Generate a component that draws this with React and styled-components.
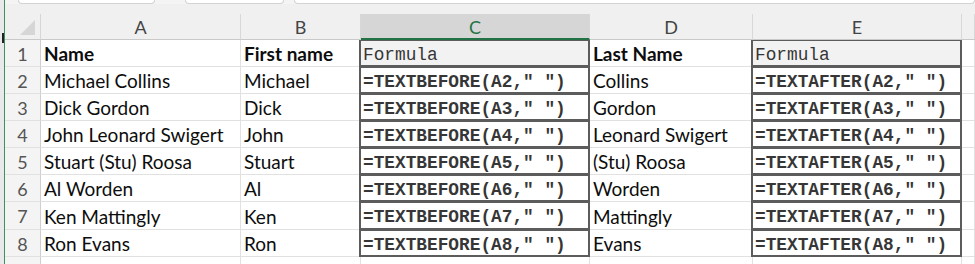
import React from "react";
import styled, { createGlobalStyle, css } from "styled-components";

const Global = createGlobalStyle`
  html, body { margin: 0; padding: 0; background: #ffffff; }
  #root { width: 975px; height: 264px; overflow: hidden; }
`;

const Frame = styled.div`
  display: flex;
  width: 975px;
  height: 264px;
  overflow: hidden;
  background: #ffffff;
`;

const LeftEdge = styled.div`
  position: relative;
  flex: 0 0 4px;
  background: #e9e9e9;
  border-right: 1px solid #3f8f5f;
`;

const EdgeMark = styled.span`
  position: absolute;
  left: 2px;
  top: 33px;
  width: 2px;
  height: 10px;
  background: #222;
`;

const Main = styled.div`
  flex: 1;
  display: flex;
  flex-direction: column;
  min-width: 0;
`;

const TopStrip = styled.div`
  display: flex;
  height: 4px;
  background: #f4f4f4;
  padding-left: 13px;
`;

const Tab = styled.div`
  flex: ${(p) => (p.$grow ? "1" : `0 0 ${p.$w}px`)};
  margin-right: ${(p) => p.$mr || 0}px;
  height: 3px;
  background: #ffffff;
  border: 1px solid #d3d3d3;
  border-top: none;
  border-radius: 0 0 4px 4px;
`;

const Row = styled.div`
  display: flex;
  height: ${(p) => p.$h}px;
  flex: 0 0 ${(p) => p.$h}px;
`;

const HeaderRow = styled.div`
  display: flex;
  height: 36px;
  flex: 0 0 36px;
  background: #f0f0f0;
  align-items: flex-end;
  position: relative;
  z-index: 2;
`;

const Corner = styled.div`
  flex: 0 0 36px;
  height: 26px;
  box-sizing: border-box;
  border-right: 1px solid #d6d6d6;
  border-bottom: 1px solid #c9c9c9;
  display: flex;
  align-items: flex-end;
  justify-content: flex-end;
  padding: 0 5px 4px 0;
`;

const ColHead = styled.div`
  flex: ${(p) => (p.$w ? `0 0 ${p.$w}px` : "1")};
  height: 26px;
  box-sizing: border-box;
  border-right: 1px solid #d8d8d8;
  border-bottom: 1px solid #c9c9c9;
  display: flex;
  align-items: center;
  justify-content: center;
  font-family: "Lato", "Liberation Sans", sans-serif;
  font-size: 18px;
  color: #444444;
  padding-top: 1px;
  ${(p) =>
    p.$active &&
    css`
      background: #d6d6d6;
      color: #217346;
      border-bottom: 2px solid #217346;
    `}
`;

const RowHead = styled.div`
  flex: 0 0 36px;
  box-sizing: border-box;
  background: #f4f4f4;
  border-right: 1px solid #cfcfcf;
  border-bottom: 1px solid #e2e2e2;
  display: flex;
  align-items: center;
  justify-content: center;
  font-family: "Lato", "Liberation Sans", sans-serif;
  font-size: 18px;
  color: #555555;
  padding-top: 1px;
`;

const Cell = styled.div`
  position: relative;
  flex: ${(p) => (p.$w ? `0 0 ${p.$w}px` : "1")};
  box-sizing: border-box;
  border-right: 1px solid #e1e1e1;
  border-bottom: 1px solid #e1e1e1;
  display: flex;
  align-items: center;
  white-space: nowrap;
  overflow: visible;
  padding-left: 3px;
  padding-top: 1px;
  font-family: "Lato", "Liberation Sans", sans-serif;
  font-size: 19px;
  color: #0d0d0d;
  font-weight: ${(p) => (p.$bold ? 700 : 400)};
  background: ${(p) => (p.$shade ? "#f2f2f2" : "#ffffff")};
  ${(p) =>
    p.$mono &&
    css`
      font-family: "Liberation Mono", "Courier New", monospace;
      font-size: 17.8px;
      font-weight: ${p.$bold ? 700 : 400};
      color: #363636;
      padding-left: 2px;
      padding-top: 3px;
    `}
  ${(p) =>
    p.$boxed &&
    css`
      &::after {
        content: "";
        position: absolute;
        top: -1px;
        left: -2px;
        right: -1px;
        bottom: -1px;
        border: 2px solid #5c5c5c;
        pointer-events: none;
      }
    `}
`;

const cols = [
  { key: "A", w: 200 },
  { key: "B", w: 120 },
  { key: "C", w: 229 },
  { key: "D", w: 163 },
  { key: "E", w: 209 },
  { key: "F" },
];

const data = [
  ["Michael Collins", "Michael", "A2", "Collins"],
  ["Dick Gordon", "Dick", "A3", "Gordon"],
  ["John Leonard Swigert", "John", "A4", "Leonard Swigert"],
  ["Stuart (Stu) Roosa", "Stuart", "A5", "(Stu) Roosa"],
  ["Al Worden", "Al", "A6", "Worden"],
  ["Ken Mattingly", "Ken", "A7", "Mattingly"],
  ["Ron Evans", "Ron", "A8", "Evans"],
];

const heights = [27, 27, 27, 27, 27, 27, 28, 27];

export default function App() {
  return (
    <>
      <Global />
      <Frame>
        <LeftEdge>
          <EdgeMark />
        </LeftEdge>
        <Main>
          <TopStrip>
            <Tab $w={135} $mr={30} />
            <Tab $w={97} $mr={10} />
            <Tab $grow />
          </TopStrip>
          <HeaderRow>
            <Corner>
              <svg width="15" height="15" viewBox="0 0 15 15">
                <polygon points="0,15 15,0 15,15" fill="#d6d6d6" />
              </svg>
            </Corner>
            {cols.map((c) => (
              <ColHead key={c.key} $w={c.w} $active={c.key === "C"}>
                {c.key === "F" ? "" : c.key}
              </ColHead>
            ))}
          </HeaderRow>
          <Row $h={heights[0]}>
            <RowHead>1</RowHead>
            <Cell $w={200} $bold>Name</Cell>
            <Cell $w={120} $bold>First name</Cell>
            <Cell $w={229} $mono $boxed $shade>Formula</Cell>
            <Cell $w={163} $bold>Last Name</Cell>
            <Cell $w={209} $mono $boxed $shade>Formula</Cell>
            <Cell />
          </Row>
          {data.map((r, i) => (
            <Row key={r[2]} $h={heights[i + 1]}>
              <RowHead>{i + 2}</RowHead>
              <Cell $w={200}>{r[0]}</Cell>
              <Cell $w={120}>{r[1]}</Cell>
              <Cell $w={229} $mono $bold $boxed>
                {`=TEXTBEFORE(${r[2]}," ")`}
              </Cell>
              <Cell $w={163}>{r[3]}</Cell>
              <Cell $w={209} $mono $bold $boxed>
                {`=TEXTAFTER(${r[2]}," ")`}
              </Cell>
              <Cell />
            </Row>
          ))}
          <Row $h={20}>
            <RowHead />
            <Cell $w={200} />
            <Cell $w={120} />
            <Cell $w={229} />
            <Cell $w={163} />
            <Cell $w={209} />
            <Cell />
          </Row>
        </Main>
      </Frame>
    </>
  );
}
